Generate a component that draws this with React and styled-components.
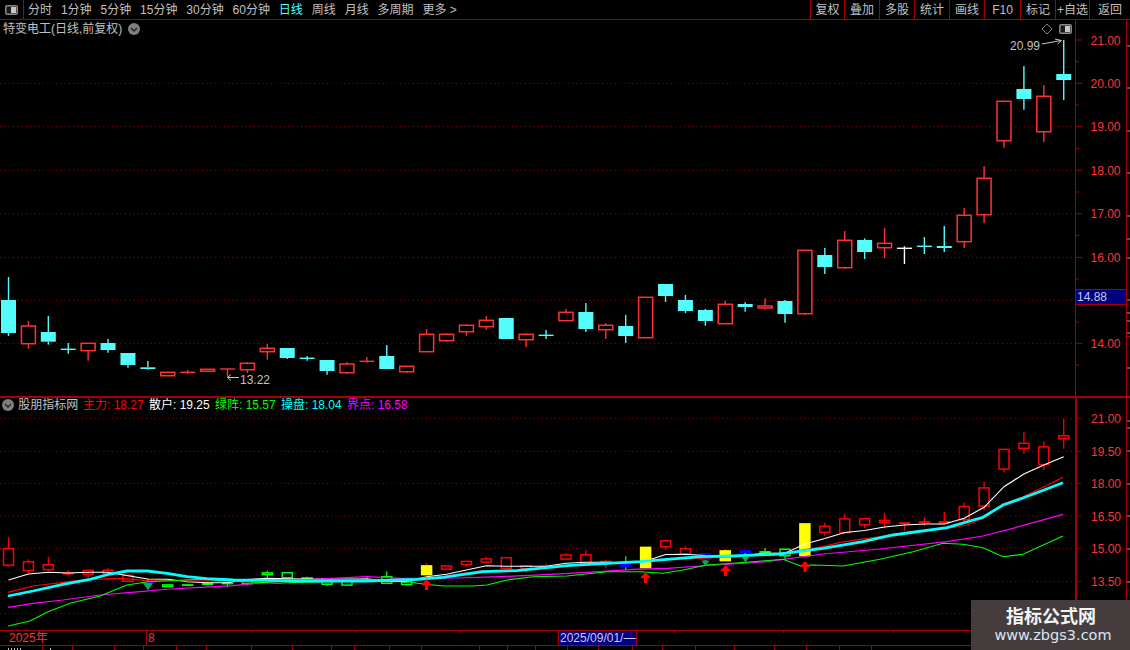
import React from 'react';
import styled, { createGlobalStyle } from 'styled-components';

const RED_LINE = '#a80000';
const GRID_RED = '#8c0000';
const AXIS_RED = '#ff3232';
const CYAN = '#54fcfc';
const FONT = '"Liberation Sans", "Noto Sans CJK SC", sans-serif';

const GlobalStyle = createGlobalStyle`
  html, body {
    margin: 0;
    padding: 0;
    background: #000;
    overflow: hidden;
  }
`;

const Page = styled.div`
  position: relative;
  width: 1130px;
  height: 650px;
  overflow: hidden;
  display: flex;
  flex-direction: column;
  background: #000;
  color: #c0c0c0;
  font-family: ${FONT};
  font-size: 12px;
  line-height: 14px;
`;

const Toolbar = styled.div`
  flex: none;
  height: 19px;
  display: flex;
  align-items: center;
  border-bottom: 1px solid ${RED_LINE};
`;

const LayoutButton = styled.div`
  width: 23px;
  height: 19px;
  display: flex;
  align-items: center;
  justify-content: center;
  border-right: 1px solid ${RED_LINE};
`;

const Periods = styled.div`
  display: flex;
  gap: 8.9px;
  padding-left: 4px;
  flex: 1;
`;

const Period = styled.span`
  color: ${(p) => (p.$active ? CYAN : '#c0c0c0')};
  white-space: nowrap;
`;

const ToolGroup = styled.div`
  display: flex;
  height: 19px;
`;

const ToolButton = styled.div`
  width: ${(p) => p.$w}px;
  box-sizing: border-box;
  border-left: 1px solid ${RED_LINE};
  display: flex;
  align-items: center;
  justify-content: center;
  white-space: nowrap;
`;

const PanelRow = styled.div`
  flex: none;
  height: ${(p) => p.$h}px;
  display: flex;
  border-bottom: ${(p) => (p.$divider ? `2px solid ${RED_LINE}` : 'none')};
`;

const ChartArea = styled.div`
  position: relative;
  width: 1075px;
  height: 100%;
`;

const AxisArea = styled.div`
  position: relative;
  width: 55px;
  height: 100%;
`;

const DrawSvg = styled.svg`
  display: block;
  width: 100%;
  height: 100%;

  text {
    font-family: ${FONT};
    font-size: 12px;
  }
`;

const TitleRow = styled.div`
  position: absolute;
  left: ${(p) => p.$left}px;
  top: ${(p) => p.$top}px;
  display: flex;
  align-items: center;
  gap: ${(p) => p.$gap}px;
  white-space: nowrap;
`;

const IndicatorName = styled.span`
  margin: 0 -0.6px 0 -1px;
`;

const Legend = styled.span`
  color: ${(p) => p.$color};
`;

const StockTools = styled.div`
  position: absolute;
  left: 1041px;
  top: 3px;
  display: flex;
  align-items: center;
  gap: 6px;
`;

const PriceTag = styled.div`
  position: absolute;
  left: 1px;
  top: 269px;
  width: 50px;
  height: 16px;
  box-sizing: border-box;
  background: #000080;
  border-top: 1px solid ${RED_LINE};
  border-bottom: 1px solid ${RED_LINE};
  color: #c8c8f0;
  padding-left: 1px;
  line-height: 14px;
`;

const DateBar = styled.div`
  position: relative;
  flex: none;
  height: 14px;
  display: flex;
  border-top: 1px solid ${RED_LINE};
  border-bottom: 1px solid ${RED_LINE};
  color: ${AXIS_RED};
`;

const DateCell = styled.div`
  width: ${(p) => p.$w}px;
  box-sizing: border-box;
  padding-left: ${(p) => p.$pad}px;
  border-right: ${(p) => (p.$ruled ? `1px solid ${RED_LINE}` : 'none')};
  line-height: 15px;
`;

const DateTick = styled.i`
  position: absolute;
  top: 0;
  left: ${(p) => p.$x}px;
  width: 1px;
  height: 2px;
  background: ${RED_LINE};
`;

const CursorDate = styled.div`
  position: absolute;
  left: 558px;
  top: 0;
  width: 79px;
  height: 14px;
  box-sizing: border-box;
  background: #000080;
  border-left: 1px solid ${RED_LINE};
  border-right: 1px solid ${RED_LINE};
  color: #c8c8f0;
  padding-left: 1px;
  line-height: 15px;
  white-space: nowrap;
`;

const TabStrip = styled.div`
  flex: 1;
  display: flex;
`;

const Tab = styled.div`
  flex: none;
  width: ${(p) => p.$w}px;
  box-sizing: border-box;
  border-right: 1px solid ${RED_LINE};
  padding: 2px 0 0 ${(p) => p.$markLeft}px;
`;

const TabMark = styled.i`
  display: block;
  width: ${(p) => p.$w}px;
  height: 2px;
  background: repeating-linear-gradient(90deg, #c0c0c0 0 1px, transparent 1px 3px);
`;

const Watermark = styled.div`
  position: absolute;
  left: 971px;
  top: 600px;
  width: 159px;
  height: 50px;
  background: #453d3d;
  display: flex;
  flex-direction: column;
  align-items: center;
`;

const WatermarkTitle = styled.div`
  font-family: "Noto Sans CJK SC", sans-serif;
  font-weight: 700;
  font-size: 18px;
  line-height: 22px;
  margin-top: 4px;
  margin-left: 1px;
  color: #f4f4f4;
`;

const WatermarkUrl = styled.div`
  font-family: "DejaVu Sans", sans-serif;
  font-size: 14.5px;
  line-height: 18px;
  margin-left: 5px;
  color: #d6e6f8;
`;

const periods = ['分时', '1分钟', '5分钟', '15分钟', '30分钟', '60分钟', '日线', '周线', '月线', '多周期', '更多 >'];
const tools = [['复权', 34], ['叠加', 35], ['多股', 35], ['统计', 35], ['画线', 35], ['F10', 36], ['标记', 35], ['+自选', 34], ['返回', 41]];

// hi, body top, body bottom, lo in screen y of the price panel
const candles = [
  ['c', 277, 300, 333, 336], ['r', 321, 326, 343.7, 348.7], ['c', 316, 332, 341.7, 344.7],
  ['c', 343, 349.3, 349.3, 353.7], ['r', 343.3, 343.3, 350.7, 360.7], ['c', 339, 343, 350, 352.7],
  ['c', 353, 353, 365, 367.7], ['c', 361, 367.3, 369, 369.7], ['r', 372.3, 372.3, 375.7, 376.3],
  ['r', 370, 372.3, 372.3, 373.7], ['r', 369.3, 369.3, 371.3, 371.3], ['r', 368.7, 369, 369, 376.7],
  ['r', 362, 363.3, 369.7, 373], ['r', 344, 348.3, 351.7, 359.7], ['c', 348, 348, 358, 359],
  ['c', 356, 358.3, 358.3, 360.7], ['c', 360, 360, 371, 374.7], ['r', 362, 364, 372.7, 374],
  ['r', 357, 361.3, 361.3, 362.7], ['c', 345, 356, 369, 369], ['r', 366.3, 366.3, 371.7, 373],
  ['r', 329, 334.3, 351.7, 351.7], ['r', 333.3, 334.3, 340.7, 342], ['r', 324.3, 325.3, 331.7, 335.7],
  ['r', 316, 320.3, 326.7, 329.7], ['c', 318, 318, 339, 339], ['r', 333.3, 334.3, 339.7, 347],
  ['c', 330, 335.3, 335.3, 339], ['r', 309, 312.3, 320.7, 320.7], ['c', 303, 312, 329, 332],
  ['r', 323, 325.3, 329.7, 339], ['c', 315, 326, 336, 343], ['r', 297.3, 297.3, 337.7, 337.7],
  ['c', 284, 284, 296, 302], ['c', 295, 300, 311, 313], ['c', 309, 310, 321, 325.7],
  ['r', 300.7, 304.3, 323.7, 323.7], ['c', 302.3, 304, 307, 311.7], ['r', 298.3, 306, 308, 309.7],
  ['c', 300, 301, 314, 322.7], ['r', 250.3, 250.3, 313.7, 315], ['c', 248, 255, 267, 274],
  ['r', 231, 240.3, 267.7, 269], ['c', 238.3, 240, 252, 259], ['r', 228, 243.3, 247.7, 258],
  ['w', 246.3, 248.3, 248.3, 264], ['c', 237, 246.3, 246.3, 254], ['c', 226, 246, 248, 252],
  ['r', 208, 215.3, 241.7, 248], ['r', 166, 178.3, 214.7, 223], ['r', 101.3, 101.3, 140.7, 147.7],
  ['c', 66, 89, 99, 109.7], ['r', 85, 96.3, 131.7, 142], ['c', 40, 74, 80, 100],
];

const subKinds = {
  7: 'blue', 21: 'yellow', 31: 'blue', 32: 'yellow', 35: 'blue', 36: 'yellow', 37: 'blue', 40: 'yellow',
};
const subGreen = [8, 9, 10, 11, 12, 13, 14, 15, 16, 17, 18, 19, 20, 38, 39];

const candleX = (i) => 8.5 + 19.91 * i;
const toSub = (y) => 398.75 + 0.5 * y;

const subStyle = (i) => {
  const kind = subKinds[i];
  if (kind === 'yellow') return { wick: '#ff0000', fill: '#ffff00', stroke: '#ffff00' };
  if (kind === 'blue') return { wick: '#00ff00', fill: '#0000ff', stroke: '#0000ff' };
  if (subGreen.includes(i)) return { wick: '#00ff00', fill: 'none', stroke: '#00ff00' };
  return { wick: '#ff0000', fill: 'none', stroke: '#ff0000' };
};

const whiteLine = [580, 574, 572.3, 573, 572.3, 572.3, 575.7, 579, 579.3, 581.7, 582.7, 582.7, 579.5, 578.3, 578.7, 579, 579, 579, 579, 581.3, 581.7, 576.7, 574.3, 570, 565.7, 566.3, 566.3, 566.3, 563.3, 562.3, 562.3, 562.7, 561, 554.5, 554.3, 555.5, 555.7, 555.5, 553.3, 553.3, 544, 538.5, 532.5, 530.5, 527, 525, 524, 524, 518.3, 507.3, 486.7, 474, 465, 456.7]
  .map((y, i) => [candleX(i), y]);
const redLine = [[8, 592.3], [33, 586], [63, 582.3], [90, 579.3], [120, 578.3], [147, 580.7], [233, 581], [300, 580], [367, 580], [417, 579], [443, 576.7], [483, 570.7], [517, 570], [567, 566], [607, 563.3], [640, 561.7], [667, 559.3], [700, 558.3], [733, 556.7], [783, 553.3], [823, 546.7], [840, 542.3], [880, 536.7], [913, 531.7], [947, 528.3], [967, 525], [987, 516.7], [1003, 504], [1023, 496.7], [1043, 487.3], [1063, 477.3]];
const cyanLine = [[8, 596], [33, 591], [63, 584.3], [90, 579.3], [110, 574], [127, 571], [147, 571], [167, 573.3], [187, 576.7], [207, 578.7], [233, 580], [267, 580.3], [300, 581], [367, 581], [417, 579.3], [443, 577.3], [483, 571.7], [517, 570.7], [567, 565.7], [607, 563.3], [640, 561.7], [667, 559.3], [700, 556.7], [733, 556], [780, 554], [790, 552.7], [823, 548.3], [863, 541.7], [893, 535], [947, 527.7], [983, 517.3], [1003, 505], [1023, 498], [1063, 482.7]];
const magentaLine = [[8, 607.3], [33, 603.3], [63, 600], [100, 595], [140, 591.7], [170, 589], [200, 587.3], [233, 585.7], [267, 582.3], [317, 579], [367, 576.7], [400, 578.3], [457, 578], [500, 576.7], [550, 574.3], [600, 571.7], [633, 569.3], [667, 568.3], [700, 566], [733, 564], [767, 561.7], [823, 554], [880, 549], [947, 541.7], [983, 536], [1013, 528.3], [1063, 514.3]];
const greenLine = [[8, 626], [30, 621], [47, 612.3], [70, 603.3], [100, 596], [127, 585], [148, 581.7], [200, 579.3], [277, 583.3], [300, 582.3], [360, 581], [400, 579.3], [417, 583.3], [443, 586], [473, 586], [487, 585], [507, 580], [533, 576.7], [567, 576], [607, 571.7], [640, 571.7], [663, 573.3], [683, 570], [707, 565], [753, 561.7], [783, 559.3], [800, 565.7], [813, 565], [843, 566], [880, 559.3], [913, 551.7], [943, 543.3], [963, 544.3], [983, 547.7], [1003, 556.7], [1023, 554.3], [1063, 536]];

// 15.00 has a grid line and a tick; its label sits under the last-price tag
const mainPrices = [
  ['21.00', 40, false], ['20.00', 83.3, true], ['19.00', 126.7, true], ['18.00', 170.3, true],
  ['17.00', 213.7, true], ['16.00', 257.3, true], ['', 300.3, true], ['14.00', 343.3, true],
];
const subPrices = [
  ['21.00', 418.7], ['19.50', 451.3], ['18.00', 483.3], ['16.50', 516], ['15.00', 548.3], ['13.50', 581.3], ['', 613.3],
];
const mainGutterTicks = [46, 88, 131, 173, 216, 239, 258, 300, 313, 321, 333, 368];
const subGutterTicks = [421, 428, 451, 484, 516, 549, 582, 614];

const tabs = [[43, 8, 14], [30, 7, 1], [42], [29], [33], [30], [45], [41], [39], [23], [35], [32], [58], [28], [28], [32], [31], [34], [30], [33], [39], [40], [32], [33], [32]];

const points = (list) => list.map(([x, y]) => `${x},${y}`).join(' ');

function LayoutIcon() {
  return (
    <svg width="13" height="10" viewBox="0 0 13 10">
      <rect x="0.75" y="0.75" width="11.5" height="8.5" rx="1.5" fill="#1a1a1a" stroke="#8a8a8a" strokeWidth="1.5" />
      <rect x="6" y="2" width="5" height="6" fill="#c8c8c8" />
    </svg>
  );
}

function ChevronBadge() {
  return (
    <svg width="12" height="12" viewBox="0 0 12 12">
      <circle cx="6" cy="6" r="6" fill="#808080" />
      <path d="M3 5 L6 8 L9 5" fill="none" stroke="#262626" strokeWidth="1.5" />
    </svg>
  );
}

function MainCandle({ c, i }) {
  const [kind, hi, top, bottom, lo] = c;
  const x = candleX(i);
  const color = kind === 'r' ? AXIS_RED : kind === 'w' ? '#ffffff' : CYAN;
  const flat = bottom - top < 0.5;
  return (
    <g>
      <line x1={x} x2={x} y1={hi} y2={top} stroke={color} strokeWidth="1.4" />
      <line x1={x} x2={x} y1={bottom} y2={lo} stroke={color} strokeWidth="1.4" />
      {flat ? (
        <line x1={x - 7.5} x2={x + 7.5} y1={top} y2={top} stroke={color} strokeWidth="1.4" />
      ) : kind === 'r' ? (
        <rect x={x - 7} y={top} width="14" height={bottom - top} fill="#000" stroke={color} strokeWidth="1.5" />
      ) : (
        <rect x={x - 7.5} y={top} width="15" height={bottom - top} fill={color} />
      )}
    </g>
  );
}

function SubCandle({ c, i }) {
  const [, hi, top, bottom, lo] = c;
  const x = candleX(i);
  const s = subStyle(i);
  const y1 = toSub(top);
  const y2 = toSub(bottom);
  return (
    <g>
      <line x1={x} x2={x} y1={toSub(hi)} y2={y1} stroke={s.wick} strokeWidth="1.3" />
      <line x1={x} x2={x} y1={y2} y2={toSub(lo)} stroke={s.wick} strokeWidth="1.3" />
      <rect x={x - 5} y={y1} width="10" height={Math.max(y2 - y1, 0.4)} fill={s.fill} stroke={s.stroke} strokeWidth="1.5" />
    </g>
  );
}

function UpArrow({ x, y }) {
  return (
    <path
      d={`M${x} ${y} L${x + 5.5} ${y + 6} L${x + 1.6} ${y + 6} L${x + 1.6} ${y + 11} L${x - 1.6} ${y + 11} L${x - 1.6} ${y + 6} L${x - 5.5} ${y + 6} Z`}
      fill="#ff0000"
    />
  );
}

function DownArrow({ x, y, size }) {
  return <path d={`M${x - size} ${y} L${x + size} ${y} L${x} ${y + size * 1.5} Z`} fill="#00b050" />;
}

function PriceChart() {
  return (
    <DrawSvg viewBox="0 20 1075 376" preserveAspectRatio="none">
      {mainPrices.filter((p) => p[2]).map(([, y]) => (
        <line key={y} x1="0" x2="1075" y1={y} y2={y} stroke={GRID_RED} strokeDasharray="1.3 3" />
      ))}
      {candles.map((c, i) => (
        <MainCandle key={i} c={c} i={i} />
      ))}
      <text x="1010" y="50" fill="#c0c0c0">20.99</text>
      <path d="M1042 44 L1061 40.5 M1055 39 L1061.5 40.5 L1057.5 44" fill="none" stroke="#c8c8c8" />
      <text x="240" y="383.5" fill="#c0c0c0">13.22</text>
      <path d="M239 377.5 L228 377.5 M231 374.5 L227.5 377.5 L231 380.5" fill="none" stroke="#c8c8c8" />
    </DrawSvg>
  );
}

function IndicatorChart() {
  return (
    <DrawSvg viewBox="0 398 1075 232" preserveAspectRatio="none">
      {subPrices.map(([, y]) => (
        <line key={y} x1="0" x2="1075" y1={y} y2={y} stroke={GRID_RED} strokeDasharray="1.3 3" />
      ))}
      {candles.map((c, i) => (
        <SubCandle key={i} c={c} i={i} />
      ))}
      <polyline points={points(whiteLine)} fill="none" stroke="#ffffff" strokeWidth="1.1" />
      <polyline points={points(redLine)} fill="none" stroke="#ff0000" strokeWidth="1.2" />
      <polyline points={points(magentaLine)} fill="none" stroke="#ff00ff" strokeWidth="1.2" />
      <polyline points={points(greenLine)} fill="none" stroke="#00ff00" strokeWidth="1.1" />
      <polyline points={points(cyanLine)} fill="none" stroke="#00ffff" strokeWidth="2.8" />
      <DownArrow x={148} y={583} size={5} />
      <DownArrow x={705.5} y={560.5} size={4} />
      <DownArrow x={745.5} y={556.5} size={4} />
      <UpArrow x={426.6} y={579} />
      <UpArrow x={645.6} y={572} />
      <UpArrow x={725.5} y={565} />
      <UpArrow x={805} y={561} />
    </DrawSvg>
  );
}

function PriceAxis() {
  const minors = [61.7, 105, 148.5, 192, 235.5, 279, 322, 365];
  return (
    <DrawSvg viewBox="1075 20 55 376" preserveAspectRatio="none">
      <line x1="1075.5" x2="1075.5" y1="20" y2="396" stroke={RED_LINE} />
      <line x1="1126.5" x2="1126.5" y1="20" y2="396" stroke={RED_LINE} />
      {mainPrices.map(([label, y]) => (
        <g key={y}>
          <line x1="1076" x2="1082" y1={y} y2={y} stroke={RED_LINE} />
          <text x="1090.5" y={y + 4.5} fill={AXIS_RED}>{label}</text>
        </g>
      ))}
      {minors.map((y) => (
        <line key={y} x1="1076" x2="1079" y1={y} y2={y} stroke={RED_LINE} />
      ))}
      {mainGutterTicks.map((y) => (
        <line key={y} x1="1127" x2="1130" y1={y} y2={y} stroke="#a0a0a0" />
      ))}
      <line x1="1127" x2="1130" y1="336.5" y2="336.5" stroke={RED_LINE} />
    </DrawSvg>
  );
}

function IndicatorAxis() {
  return (
    <DrawSvg viewBox="1075 398 55 232" preserveAspectRatio="none">
      <line x1="1076" x2="1076" y1="398" y2="630" stroke={RED_LINE} strokeWidth="2" />
      <line x1="1126.5" x2="1126.5" y1="398" y2="630" stroke={RED_LINE} />
      {subPrices.map(([label, y]) => (
        <g key={y}>
          <line x1="1077" x2="1081" y1={y} y2={y} stroke={RED_LINE} />
          <text x="1091" y={y + 4.5} fill={AXIS_RED}>{label}</text>
        </g>
      ))}
      {subGutterTicks.map((y) => (
        <line key={y} x1="1127" x2="1130" y1={y} y2={y} stroke="#a0a0a0" />
      ))}
    </DrawSvg>
  );
}

export default function App() {
  return (
    <Page>
      <GlobalStyle />
      <Toolbar>
        <LayoutButton>
          <LayoutIcon />
        </LayoutButton>
        <Periods>
          {periods.map((p) => (
            <Period key={p} $active={p === '日线'}>{p}</Period>
          ))}
        </Periods>
        <ToolGroup>
          {tools.map(([label, w]) => (
            <ToolButton key={label} $w={w}>{label}</ToolButton>
          ))}
        </ToolGroup>
      </Toolbar>

      <PanelRow $h={376} $divider>
        <ChartArea>
          <PriceChart />
          <TitleRow $left={3} $top={2} $gap={6}>
            <span>特变电工(日线,前复权)</span>
            <ChevronBadge />
          </TitleRow>
          <StockTools>
            <svg width="12" height="12" viewBox="0 0 12 12">
              <path d="M6 1 L11 6 L6 11 L1 6 Z" fill="none" stroke="#808080" />
            </svg>
            <LayoutIcon />
          </StockTools>
        </ChartArea>
        <AxisArea>
          <PriceAxis />
          <PriceTag>14.88</PriceTag>
        </AxisArea>
      </PanelRow>

      <PanelRow $h={232}>
        <ChartArea>
          <IndicatorChart />
          <TitleRow $left={2} $top={0} $gap={5.3}>
            <ChevronBadge />
            <IndicatorName>股朋指标网</IndicatorName>
            <Legend $color="#ff0000">主力: 18.27</Legend>
            <Legend $color="#ffffff">散户: 19.25</Legend>
            <Legend $color="#00ff00">绿阵: 15.57</Legend>
            <Legend $color="#00ffff">操盘: 18.04</Legend>
            <Legend $color="#ff00ff">界点: 16.58</Legend>
          </TitleRow>
        </ChartArea>
        <AxisArea>
          <IndicatorAxis />
        </AxisArea>
      </PanelRow>

      <DateBar>
        <DateCell $w={147} $pad={9} $ruled>2025年</DateCell>
        <DateCell $w={60} $pad={1}>8</DateCell>
        {[251, 355, 460, 674, 783, 893].map((x) => (
          <DateTick key={x} $x={x} />
        ))}
        <CursorDate>2025/09/01/—</CursorDate>
      </DateBar>

      <TabStrip>
        {tabs.map(([w, markLeft = 0, markWidth], i) => (
          <Tab key={i} $w={w} $markLeft={markLeft}>
            {markWidth && <TabMark $w={markWidth} />}
          </Tab>
        ))}
      </TabStrip>

      <Watermark>
        <WatermarkTitle>指标公式网</WatermarkTitle>
        <WatermarkUrl>www.zbgs3.com</WatermarkUrl>
      </Watermark>
    </Page>
  );
}
